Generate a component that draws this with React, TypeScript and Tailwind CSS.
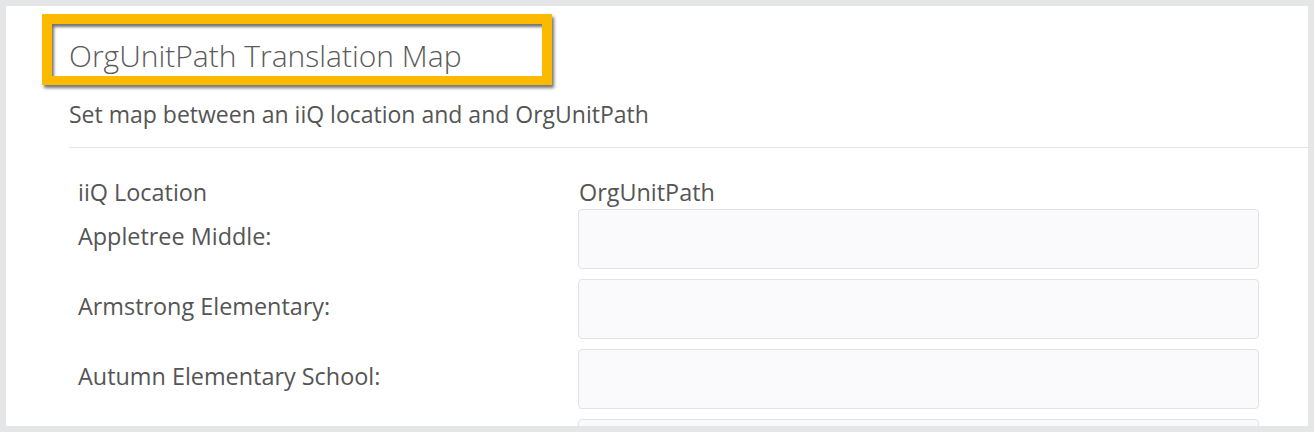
const rows = ["Appletree Middle:", "Armstrong Elementary:", "Autumn Elementary School:", ""];

export default function App() {
  return (
    <div className="h-[432px] overflow-hidden bg-[#e5e6e8] pt-[6px] pl-[6px] pr-[6px]" style={{ fontFamily: '"Open Sans", sans-serif' }}>
      <div className="h-[420px] overflow-hidden bg-white">
        <div className="ml-[36px] mt-[8px] w-[510px] border-[10px] border-b-[9px] border-[#fbb900] shadow-[2px_3px_3px_rgba(0,0,0,0.55),inset_2px_3px_3px_rgba(0,0,0,0.55)]">
          <h1 className="h-[52px] pl-[17px] pt-[12px] text-[30px] font-light leading-[40px] text-[#5a5a5a]">
            OrgUnitPath Translation Map
          </h1>
        </div>
        <p className="ml-[63px] mt-[15px] text-[23px] leading-[28px] text-[#555]">
          Set map between an iiQ location and and OrgUnitPath
        </p>
        <div className="ml-[63px] mt-[19px] border-t border-[#e5e5e5]" />
        <div className="mt-[30px] pl-[72px] grid grid-cols-[500px_681px] text-[23.4px] leading-[28px] text-[#555]">
          <div>iiQ Location</div>
          <div className="pl-[1px]">OrgUnitPath</div>
          {rows.map((r, i) => (
            <div key={i} className="contents">
              <div className={i === 0 ? "mt-[3px] pt-[13px]" : "mt-[10px] pt-[13px]"}>{r}</div>
              <div className={i === 0 ? "mt-[3px]" : "mt-[10px]"}>
                <div className="h-[60px] rounded-[4px] border border-[#e2e2e5] bg-[#fafafc]" />
              </div>
            </div>
          ))}
        </div>
      </div>
    </div>
  );
}
